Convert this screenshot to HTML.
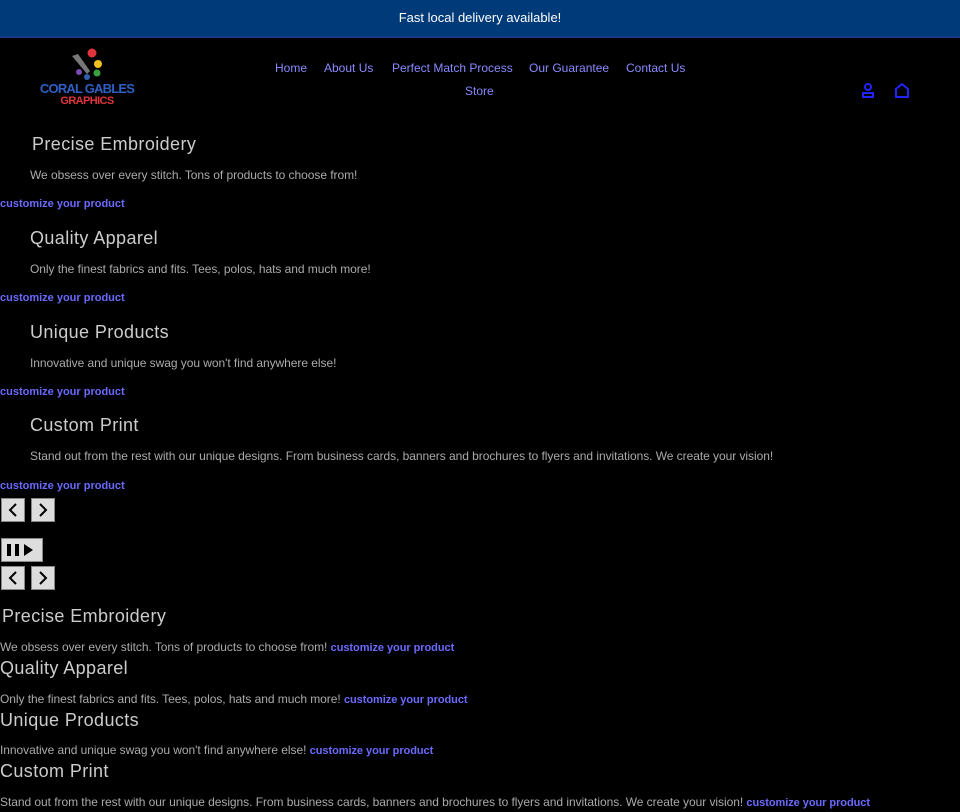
<!DOCTYPE html>
<html><head><meta charset="utf-8"><style>
*{margin:0;padding:0;box-sizing:border-box}
body{width:960px;height:812px;background:#000;font-family:"Liberation Sans",sans-serif;color:#bbb;position:relative;overflow:hidden}
.ab{position:absolute}
.banner{left:0;top:0;width:960px;height:38px;background:#003a78;color:#fff;font-size:13px;text-align:center;line-height:36px;border-bottom:2px solid #1a3a8a}
.nav a{position:absolute;color:#8a8aff;font-size:12px;text-decoration:none;white-space:nowrap}
h2{position:absolute;font-weight:normal;font-size:18px;color:#ccc;letter-spacing:.4px;white-space:nowrap}
p{position:absolute;font-size:12px;color:#aaa;white-space:nowrap;letter-spacing:-0.05px}
.lk{position:absolute;font-size:11px;font-weight:bold;color:#6a6aff;white-space:nowrap}
p .lk{position:static;font-size:11px}
.btn{position:absolute;width:24px;height:24px;background:#ddd;border:1px solid #888;display:flex;align-items:center;justify-content:center}
</style></head><body>
<div class="ab banner">Fast local delivery available!</div>
<div class="ab" style="left:40px;top:47px;width:95px;height:62px">
<svg width="95" height="62" class="ab" style="left:0;top:0">
<circle cx="52" cy="6" r="4.5" fill="#e0353a"/><circle cx="58" cy="17" r="4" fill="#f0c020"/>
<circle cx="57" cy="26" r="3.5" fill="#3aa040"/><circle cx="39" cy="25" r="3" fill="#7a4ab0"/><circle cx="47" cy="30" r="3" fill="#3060b0"/>
<path d="M32 9 L38 7 L50 24 L47 27 Z" fill="#777"/>
<text x="47" y="46" font-family="Liberation Sans" font-weight="bold" font-size="13" fill="#2f5fc4" text-anchor="middle" letter-spacing="-0.8">CORAL GABLES</text>
<text x="47" y="57" font-family="Liberation Sans" font-weight="bold" font-size="11" fill="#e0353a" text-anchor="middle" letter-spacing="-0.6">GRAPHICS</text>
</svg></div>
<div class="nav">
<a style="left:275px;top:61px">Home</a>
<a style="left:324px;top:61px">About Us</a>
<a style="left:392px;top:61px">Perfect Match Process</a>
<a style="left:529px;top:61px">Our Guarantee</a>
<a style="left:626px;top:61px">Contact Us</a>
<a style="left:465px;top:84px">Store</a>
</div>
<svg class="ab" style="left:861px;top:82px" width="14" height="16"><circle cx="7" cy="5" r="3" fill="none" stroke="#2222ff" stroke-width="2"/><path d="M2 15 V11 H12 V15 Z" fill="none" stroke="#2222ff" stroke-width="2"/></svg>
<svg class="ab" style="left:894px;top:82px" width="16" height="16"><path d="M2 15 V7 L8 2 L14 7 V15 Z" fill="none" stroke="#2222ff" stroke-width="2"/></svg>

<h2 style="left:32px;top:134px">Precise Embroidery</h2>
<p style="left:30px;top:168px">We obsess over every stitch. Tons of products to choose from!</p>
<div class="lk" style="left:0;top:198px">customize your product</div>
<h2 style="left:30px;top:228px">Quality Apparel</h2>
<p style="left:30px;top:262px">Only the finest fabrics and fits. Tees, polos, hats and much more!</p>
<div class="lk" style="left:0;top:292px">customize your product</div>
<h2 style="left:30px;top:322px">Unique Products</h2>
<p style="left:30px;top:356px">Innovative and unique swag you won't find anywhere else!</p>
<div class="lk" style="left:0;top:386px">customize your product</div>
<h2 style="left:30px;top:415px">Custom Print</h2>
<p style="left:30px;top:449px">Stand out from the rest with our unique designs. From business cards, banners and brochures to flyers and invitations. We create your vision!</p>
<div class="lk" style="left:0;top:480px">customize your product</div>

<div class="btn" style="left:1px;top:498px"><svg width="12" height="14"><path d="M9 1 L3 7 L9 13" fill="none" stroke="#000" stroke-width="2"/></svg></div>
<div class="btn" style="left:31px;top:498px"><svg width="12" height="14"><path d="M3 1 L9 7 L3 13" fill="none" stroke="#000" stroke-width="2"/></svg></div>
<div class="btn" style="left:1px;top:538px;width:42px"><svg width="34" height="16"><rect x="2" y="2" width="4" height="12" fill="#000"/><rect x="10" y="2" width="4" height="12" fill="#000"/><path d="M19 2 L28 8 L19 14 Z" fill="#000"/></svg></div>
<div class="btn" style="left:1px;top:566px"><svg width="12" height="14"><path d="M9 1 L3 7 L9 13" fill="none" stroke="#000" stroke-width="2"/></svg></div>
<div class="btn" style="left:31px;top:566px"><svg width="12" height="14"><path d="M3 1 L9 7 L3 13" fill="none" stroke="#000" stroke-width="2"/></svg></div>

<h2 style="left:2px;top:606px">Precise Embroidery</h2>
<p style="left:0;top:640px">We obsess over every stitch. Tons of products to choose from! <span class="lk">customize your product</span></p>
<h2 style="left:0;top:658px">Quality Apparel</h2>
<p style="left:0;top:692px">Only the finest fabrics and fits. Tees, polos, hats and much more! <span class="lk">customize your product</span></p>
<h2 style="left:0;top:710px">Unique Products</h2>
<p style="left:0;top:743px">Innovative and unique swag you won't find anywhere else! <span class="lk">customize your product</span></p>
<h2 style="left:0;top:761px">Custom Print</h2>
<p style="left:0;top:795px">Stand out from the rest with our unique designs. From business cards, banners and brochures to flyers and invitations. We create your vision! <span class="lk">customize your product</span></p>
</body></html>
